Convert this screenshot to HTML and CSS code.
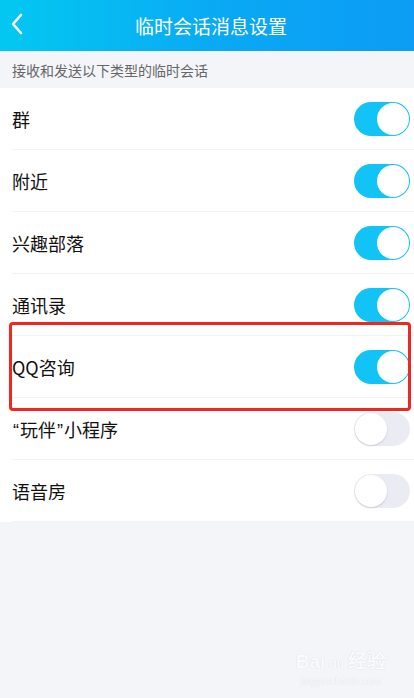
FILE: index.html
```html
<!DOCTYPE html>
<html lang="zh-CN">
<head>
  <meta charset="UTF-8" />
  <meta name="viewport" content="width=device-width, initial-scale=1" />
  <title>临时会话消息设置</title>
  <link rel="stylesheet" href="styles.css">
</head>
<body>
  <div class="header">
    <svg class="back" width="14" height="22" viewBox="0 0 14 22">
      <path d="M11 2 L3 11 L11 20" fill="none" stroke="#fff" stroke-width="2.6" stroke-linecap="round" stroke-linejoin="round"/>
    </svg>
    <h1>临时会话消息设置</h1>
  </div>

  <p class="tip">接收和发送以下类型的临时会话</p>

  <div class="list">
    <div class="row"><span>群</span><i class="switch on"></i></div>
    <div class="row"><span>附近</span><i class="switch on"></i></div>
    <div class="row"><span>兴趣部落</span><i class="switch on"></i></div>
    <div class="row"><span>通讯录</span><i class="switch on"></i></div>
    <div class="row"><span>QQ咨询</span><i class="switch on"></i></div>
    <div class="row"><span><em>“</em>玩伴<em>”</em>小程序</span><i class="switch"></i></div>
    <div class="row"><span>语音房</span><i class="switch"></i></div>
    <div class="mark"></div>
  </div>

  <div class="footer">
    <div class="logo">
      <div class="brand">Bai<b>du</b>经验</div>
      <div class="site">jingyan.baidu.com</div>
    </div>
  </div>
</body>
</html>
```

FILE: styles.css
```css
body {
  margin: 0;
  font-family: "Noto Sans CJK SC", "Noto Sans", sans-serif;
  background: #f4f5f9;
  color: #111;
}
.header {
  height: 51px;
  display: flex;
  align-items: center;
  justify-content: center;
  position: relative;
  background: linear-gradient(90deg, #03c8f1 0%, #0aa8f4 55%, #0c9cf5 100%);
}
.back {
  position: absolute;
  left: 10px;
  top: 13px;
}
.header h1 {
  margin: 0 0 0 8px;
  font-size: 19px;
  font-weight: normal;
  color: #fff;
}
.tip {
  margin: 0;
  height: 37px;
  line-height: 38px;
  padding-left: 12px;
  font-size: 14px;
  color: #666;
}
.list {
  background: #fff;
  position: relative;
}
.row {
  height: 62px;
  margin-left: 12px;
  padding-right: 4px;
  display: flex;
  align-items: center;
  justify-content: space-between;
  border-bottom: 1px solid #f3f3f5;
  font-size: 18px;
  box-sizing: border-box;
}
.row:last-of-type {
  border-bottom: none;
}
.row em {
  font-style: normal;
  font-family: "Liberation Sans", sans-serif;
  margin: 0 1px;
}
.switch {
  width: 56px;
  height: 34px;
  border-radius: 17px;
  background: #ebecf3;
  position: relative;
}
.switch::after {
  content: "";
  position: absolute;
  left: 1px;
  top: 1px;
  width: 32px;
  height: 32px;
  border-radius: 50%;
  background: #fff;
  box-shadow: 0 1px 2px rgba(0,0,0,0.15);
}
.switch.on {
  background: #12c3f6;
}
.switch.on::after {
  left: 23px;
  box-shadow: none;
}
.mark {
  position: absolute;
  left: 9px;
  top: 234px;
  width: 396px;
  height: 83px;
  border: 3px solid #f3261f;
  border-radius: 4px;
}
.footer {
  height: 175px;
  display: flex;
  justify-content: flex-end;
  align-items: flex-end;
}
.logo {
  margin: 0 28px 10px 0;
  text-align: center;
  color: #fbfbfd;
  text-shadow: 0 0 1px #cfd1d8;
}
.brand {
  font-family: "Liberation Sans", sans-serif;
  font-size: 19px;
  font-weight: bold;
  line-height: 24px;
}
.brand b {
  font-size: 12px;
  margin: 0 4px;
}
.site {
  font-family: "Liberation Sans", sans-serif;
  font-size: 10px;
}
```
